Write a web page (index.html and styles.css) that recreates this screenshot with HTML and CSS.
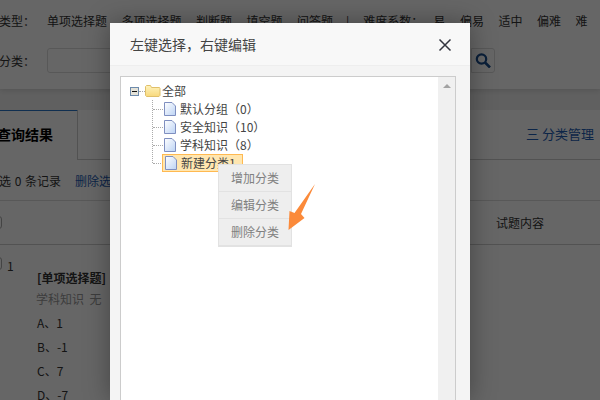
FILE: index.html
```html
<!DOCTYPE html>
<html lang="zh-CN">
<head>
<meta charset="utf-8">
<title>分类管理</title>
<link rel="stylesheet" href="styles.css">
</head>
<body>
<div class="page">
  <section class="filters">
    <div class="filter-row">
      <span class="label">类型：</span>
      <span class="opts"><span>单项选择题</span><span>多项选择题</span><span>判断题</span><span>填空题</span><span>问答题</span></span>
      <span class="sep">|</span>
      <span class="label diff">难度系数：</span>
      <span class="lvls"><span>易</span><span>偏易</span><span>适中</span><span>偏难</span><span>难</span></span>
    </div>
    <div class="search-row">
      <span class="label">分类：</span>
      <span class="input"></span>
      <span class="search-btn">
        <svg width="16" height="15" viewBox="0 0 16 15"><circle cx="6.500" cy="6" r="4.700" fill="none" stroke="#1b4f8f" stroke-width="2.200"/><path d="M10 9.500l5 5" stroke="#1b4f8f" stroke-width="2.600"/></svg>
      </span>
    </div>
  </section>
  <section class="results">
    <div class="tabs">
      <div class="tab">查询结果</div>
      <div class="manage">三 分类管理</div>
    </div>
    <div class="toolbar"><span class="count">选 0 条记录</span><a class="del">删除选中</a></div>
    <div class="thead"><span class="check"></span><span class="th">试题内容</span></div>
    <div class="row">
      <div class="num"><span class="check"></span><span class="idx">1</span></div>
      <div class="q">
        <div class="q-type">[单项选择题]</div>
        <div class="q-meta">学科知识&nbsp; 无</div>
        <div>A、1</div>
        <div>B、-1</div>
        <div>C、7</div>
        <div>D、-7</div>
      </div>
    </div>
  </section>
</div>
<div class="overlay"></div>
<div class="modal">
  <header class="modal-head">
    <span>左键选择，右键编辑</span>
    <svg class="close" width="14" height="14" viewBox="0 0 14 14"><path d="M1.500 1.500l11 11M12.500 1.500l-11 11" stroke="#33353f" stroke-width="1.500"/></svg>
  </header>
  <div class="modal-body">
    <div class="tree-box">
      <div class="tree">
        <div class="node root">
          <svg class="minus" width="9" height="9" viewBox="0 0 9 9"><rect x=".5" y=".5" width="8" height="8" fill="#e4e2d8" stroke="#6d8bac"/><path d="M2 4.500h5" stroke="#111"/></svg>
          <span class="stub short"></span>
          <svg class="folder" width="16" height="12" viewBox="0 0 16 12"><defs><linearGradient id="f" x1="0" y1="0" x2="0" y2="1"><stop offset="0" stop-color="#fff3bd"/><stop offset="1" stop-color="#f8d97c"/></linearGradient><linearGradient id="d" x1="0" y1="0" x2="1" y2="1"><stop offset="0" stop-color="#fff"/><stop offset="1" stop-color="#bcd3f5"/></linearGradient></defs><path d="M.5 10.500v-9l1-1h4l1 2h8l.5 1v7l-1 1h-12.500z" fill="url(#f)" stroke="#e0c06a"/></svg>
          <span class="txt">全部</span>
        </div>
        <ul class="children">
          <li class="node"><span class="stub"></span><svg class="doc" width="12" height="14" viewBox="0 0 12 14"><path d="M.5.5h7.500l3.500 3.500v9.500h-11z" fill="url(#d)" stroke="#7f8fc0"/></svg><span class="txt">默认分组（0）</span></li>
          <li class="node"><span class="stub"></span><svg class="doc" width="12" height="14" viewBox="0 0 12 14"><path d="M.5.5h7.500l3.500 3.500v9.500h-11z" fill="url(#d)" stroke="#7f8fc0"/></svg><span class="txt">安全知识（10）</span></li>
          <li class="node"><span class="stub"></span><svg class="doc" width="12" height="14" viewBox="0 0 12 14"><path d="M.5.5h7.500l3.500 3.500v9.500h-11z" fill="url(#d)" stroke="#7f8fc0"/></svg><span class="txt">学科知识（8）</span></li>
          <li class="node"><span class="stub"></span><span class="selected"><svg class="doc" width="12" height="14" viewBox="0 0 12 14"><path d="M.5.5h7.500l3.500 3.500v9.500h-11z" fill="url(#d)" stroke="#7f8fc0"/></svg><span class="txt">新建分类1</span></span></li>
        </ul>
      </div>
      <div class="scrollbar"><span class="up"></span></div>
    </div>
  </div>
</div>
<ul class="menu">
  <li>增加分类</li>
  <li>编辑分类</li>
  <li>删除分类</li>
</ul>
<svg class="arrow" width="40" height="55" viewBox="0 0 40 55"><polygon points="35,4 21,34 24.500,38 8.500,50 9.500,31 14.500,33" fill="#fb8a3a"/></svg>
</body>
</html>
```
FILE: styles.css
```css
* { box-sizing: border-box; }
html, body { margin: 0; padding: 0; }
body {
  width: 600px; height: 400px; overflow: hidden; position: relative;
  font-family: "Noto Sans CJK SC", "Liberation Sans", sans-serif;
  font-size: 12px; color: #333; background: #f0f0f0;
}
ul { list-style: none; margin: 0; padding: 0; }

.page { width: 600px; }
.filters { background: #fff; height: 89px; box-shadow: 0 1px 6px rgba(0,0,0,.15); position: relative; }
.filter-row { display: flex; align-items: center; height: 40px; margin-left: -1px; white-space: nowrap; }
.opts { display: flex; gap: 14.500px; margin-left: 12px; }
.sep { margin-left: 13px; }
.diff { margin-left: 14px; }
.lvls { display: flex; gap: 14.500px; margin-left: 10px; }
.search-row { display: flex; align-items: center; margin-top: 8px; height: 25px; margin-left: -1px; }
.input { margin-left: 12px; width: 400px; height: 25px; background: #fff; border: 1px solid #ddd; border-radius: 3px 0 0 3px; }
.search-btn { width: 24px; height: 25px; border: 1px solid #ddd; border-radius: 0 3px 3px 0; display: flex; align-items: center; justify-content: center; margin-left: 24px; }

.results { margin-top: 21px; background: #fff; height: 290px; overflow: hidden; }
.tabs { display: flex; justify-content: space-between; height: 50px; border-bottom: 1px solid #ccc; }
.tab { width: 78px; height: 51px; padding-top: 12px; border-top: 2px solid #2a76c8; border-right: 1px solid #ccc; font-size: 14px; font-weight: 700; color: #000; text-indent: -3px; background: #fff; margin-top: -1px; white-space: nowrap; overflow: hidden; line-height: 22px; }
.manage { color: #1e5db4; font-size: 13px; padding: 14px 6px 0 0; }
.toolbar { height: 40px; display: flex; align-items: center; gap: 14px; margin-left: -1px; }
.count { word-spacing: 1px; }
.del { color: #1e5db4; }
.thead { height: 45px; border-top: 1px solid #ddd; border-bottom: 1px solid #ccc; display: flex; align-items: center; justify-content: space-between; padding-right: 56px; }
.check { display: block; width: 13px; height: 13px; margin-left: -11px; border: 1px solid #aaa; border-radius: 3px; background: #fff; }
.row { display: flex; padding-top: 12px; }
.num { width: 37px; display: flex; gap: 5px; line-height: 18px; }
.q { padding-top: 9px; line-height: 24px; white-space: nowrap; }
.q-type { font-weight: 700; height: 21px; }
.q-meta { color: #999; margin-left: -1px; }

.overlay { position: absolute; inset: 0; background: rgba(0,0,0,.6); }

.modal { position: absolute; left: 110px; top: 23px; width: 360px; height: 377px; background: #f4f4f4; box-shadow: 0 0 24px rgba(0,0,0,.35); }
.modal-head { height: 43px; background: #f8f8f8; border-bottom: 1px solid #eee; display: flex; align-items: center; justify-content: space-between; padding: 0 18px 0 20px; font-size: 14px; color: #444; }
.close { margin-top: 1px; }
.modal-body { padding: 10px 14px 0 10px; }
.tree-box { height: 324px; border: 1px solid #ccc; border-bottom: 0; background: #fff; display: flex; justify-content: space-between; }
.tree { padding: 5px 0 0 9px; }
.scrollbar { width: 17px; background: #f0f0f0; display: flex; justify-content: center; padding-top: 7px; }
.up { width: 0; height: 0; border-left: 4px solid transparent; border-right: 4px solid transparent; border-bottom: 4px solid #a3a3a3; }

.node { display: flex; align-items: center; height: 18px; color: #444; white-space: nowrap; }
.txt { padding-bottom: 2px; }
.stub { width: 10px; border-top: 1px dotted #aaa; flex: none; }
.stub.short { width: 6px; }
.folder { flex: none; }
.root .txt { margin-left: 1px; }
.doc { flex: none; margin-left: 1px; }
.children .txt { margin-left: 4px; }
.children { margin-left: 22px; border-left: 1px dotted #aaa; height: 63px; }
.selected { display: flex; align-items: center; height: 18px; background: #ffe6b0; border: 1px solid #ffb951; padding: 0 6px 0 2px; margin-left: -1px; }
.selected .doc { margin-left: 0; }

.menu { position: absolute; left: 218px; top: 164px; width: 74px; background: #eee; border: 1px solid #e2e2e2; border-bottom-width: 2px; }
.menu li { height: 27px; line-height: 26px; text-align: center; color: #808080; border-top: 1px solid #e2e2e2; }
.menu li:first-child { border-top: 0; height: 26px; }

.arrow { position: absolute; left: 280px; top: 180px; }
```
